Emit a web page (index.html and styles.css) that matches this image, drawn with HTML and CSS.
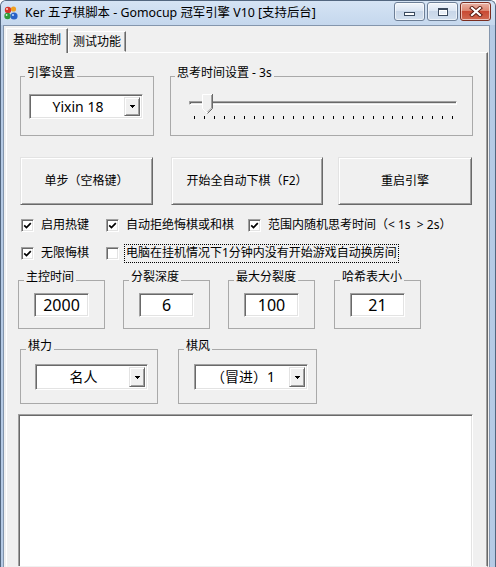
FILE: index.html
```html
<!DOCTYPE html>
<html lang="zh-CN">
<head>
<meta charset="utf-8">
<title>Ker 五子棋脚本</title>
<link rel="stylesheet" href="styles.css">
</head>
<body>
<div class="window">
  <div class="titlebar">
    <svg class="appicon" width="16" height="16" viewBox="0 0 16 16">
      <circle cx="5" cy="5" r="3.2" fill="#d8342a"/>
      <circle cx="10.5" cy="4" r="2.6" fill="#f0a020"/>
      <circle cx="4.5" cy="11" r="3.2" fill="#2f9a3a"/>
      <circle cx="11" cy="11" r="3.6" fill="#2a63c8"/>
      <circle cx="4" cy="4" r="1" fill="#ffd9c8"/>
      <circle cx="10" cy="10" r="1" fill="#cfe0ff"/>
      <circle cx="3.6" cy="10" r="0.9" fill="#d6f5d6"/>
    </svg>
    <span class="title">Ker 五子棋脚本 - Gomocup 冠军引擎 V10 [支持后台]</span>
    <div class="caption">
      <div class="cbtn">
        <span class="g-min"></span>
      </div>
      <div class="cbtn">
        <span class="g-max"></span>
      </div>
      <div class="cbtn close">
        <svg width="14" height="11" viewBox="0 0 14 11">
          <path d="M3 2 L11 9 M11 2 L3 9" stroke="#5b1a10" stroke-width="4" stroke-linecap="square"/>
          <path d="M3 2 L11 9 M11 2 L3 9" stroke="#ffffff" stroke-width="2.2" stroke-linecap="square"/>
        </svg>
      </div>
    </div>
  </div>

  <div class="client">
    <div class="tabs">
      <div class="tab active">基础控制</div>
      <div class="tab">测试功能</div>
    </div>

    <div class="panel">
      <div class="row row1">
        <fieldset class="group g-engine">
          <legend>引擎设置</legend>
          <div class="combo c-engine">
            <span class="combo-text">Yixin 18</span>
            <span class="drop"><svg width="5" height="3" viewBox="0 0 5 3" shape-rendering="crispEdges"><path d="M0 0h5v1h-1v1h-1v1h-1v-1h-1v-1h-1z" fill="#000"/></svg></span>
          </div>
        </fieldset>
        <fieldset class="group g-time">
          <legend>思考时间设置 - 3s</legend>
          <div class="slider">
            <div class="track"></div>
            <svg class="thumb" width="11" height="20" viewBox="0 0 11 20">
              <path d="M0.5 0.5 H10.5 V14.5 L5.5 19.5 L0.5 14.5 Z" fill="#f0f0f0"/>
              <path d="M0.5 14.5 V0.5 H10" stroke="#ffffff" fill="none"/>
              <path d="M10.5 0 V14.5 L5.5 19.5" stroke="#696969" fill="none"/>
              <path d="M9.5 1 V14 L5.5 18" stroke="#a0a0a0" fill="none"/>
              <path d="M0.5 14.5 L5 19" stroke="#ffffff" fill="none"/>
            </svg>
            <div class="ticks">
              <i></i><i></i><i></i><i></i><i></i><i></i><i></i><i></i><i></i>
              <i></i><i></i><i></i><i></i><i></i><i></i><i></i><i></i><i></i>
              <i></i><i></i><i></i><i></i><i></i><i></i><i></i><i></i><i></i>
            </div>
          </div>
        </fieldset>
      </div>

      <div class="row row2">
        <div class="btn b1">单步（空格键）</div>
        <div class="btn b2">开始全自动下棋（F2）</div>
        <div class="btn b3">重启引擎</div>
      </div>

      <div class="checks">
        <label class="chk"><span class="box"><svg width="9" height="9" viewBox="0 0 9 9"><path d="M1.2 4.3 L3.5 6.6 L7.8 2.2" stroke="#000" stroke-width="1.7" fill="none"/></svg></span><span>启用热键</span></label>
        <label class="chk"><span class="box"><svg width="9" height="9" viewBox="0 0 9 9"><path d="M1.2 4.3 L3.5 6.6 L7.8 2.2" stroke="#000" stroke-width="1.7" fill="none"/></svg></span><span>自动拒绝悔棋或和棋</span></label>
        <label class="chk"><span class="box"><svg width="9" height="9" viewBox="0 0 9 9"><path d="M1.2 4.3 L3.5 6.6 L7.8 2.2" stroke="#000" stroke-width="1.7" fill="none"/></svg></span><span>范围内随机思考时间（&lt; 1s &nbsp;&gt; 2s）</span></label>
        <label class="chk"><span class="box"><svg width="9" height="9" viewBox="0 0 9 9"><path d="M1.2 4.3 L3.5 6.6 L7.8 2.2" stroke="#000" stroke-width="1.7" fill="none"/></svg></span><span>无限悔棋</span></label>
        <label class="chk wide"><span class="box"></span><span class="focus">电脑在挂机情况下1分钟内没有开始游戏自动换房间</span></label>
      </div>

      <div class="row row4">
        <fieldset class="group g-small">
          <legend>主控时间</legend>
          <div class="edit">2000</div>
        </fieldset>
        <fieldset class="group g-small">
          <legend>分裂深度</legend>
          <div class="edit">6</div>
        </fieldset>
        <fieldset class="group g-small">
          <legend>最大分裂度</legend>
          <div class="edit">100</div>
        </fieldset>
        <fieldset class="group g-small">
          <legend>哈希表大小</legend>
          <div class="edit">21</div>
        </fieldset>
      </div>

      <div class="row row5">
        <fieldset class="group g-power">
          <legend>棋力</legend>
          <div class="combo c-power">
            <span class="combo-text">名人</span>
            <span class="drop"><svg width="5" height="3" viewBox="0 0 5 3" shape-rendering="crispEdges"><path d="M0 0h5v1h-1v1h-1v1h-1v-1h-1v-1h-1z" fill="#000"/></svg></span>
          </div>
        </fieldset>
        <fieldset class="group g-style">
          <legend>棋风</legend>
          <div class="combo c-style">
            <span class="combo-text">（冒进）1</span>
            <span class="drop"><svg width="5" height="3" viewBox="0 0 5 3" shape-rendering="crispEdges"><path d="M0 0h5v1h-1v1h-1v1h-1v-1h-1v-1h-1z" fill="#000"/></svg></span>
          </div>
        </fieldset>
      </div>

      <div class="log"></div>
    </div>
  </div>
</div>
</body>
</html>
```
FILE: styles.css
```css
* { box-sizing: border-box; }
html, body { margin: 0; padding: 0; }
body {
  width: 496px;
  height: 567px;
  overflow: hidden;
  font-family: "Noto Sans", "Noto Sans CJK SC", sans-serif;
  font-size: 12px;
  line-height: 14px;
  color: #000;
  background: #ffffff;
}

.window {
  width: 496px;
  height: 567px;
  display: flex;
  flex-direction: column;
  background: linear-gradient(90deg, #b4c9e4, #c5d7ee 6%, #c9daef 50%, #c5d7ee 94%, #b4c9e4);
  border: 1px solid #52667f;
  border-bottom: none;
  border-radius: 6px 6px 0 0;
  overflow: hidden;
}

/* title bar */
.titlebar {
  height: 24px;
  flex: none;
  display: flex;
  align-items: center;
  background: linear-gradient(#d5e3f4, #cbdcf0 60%, #c5d7ed);
}
.appicon { margin-left: 2px; flex: none; }
.title {
  margin-left: 6px;
  font-size: 12.4px;
  color: #000;
  white-space: nowrap;
  flex: 1;
}
.caption {
  display: flex;
  align-self: flex-start;
  margin-top: 1px;
  margin-right: 4px;
  gap: 2px;
}
.cbtn {
  width: 31px;
  height: 19px;
  border: 1px solid #6d7f97;
  border-radius: 3px;
  background: linear-gradient(#f1f5fb, #dce6f3 45%, #c8d6e8 50%, #d3e0ef);
  box-shadow: inset 0 0 0 1px rgba(255,255,255,0.6);
  display: flex;
  align-items: center;
  justify-content: center;
}
.cbtn.close {
  background: linear-gradient(#eab3a6, #dc8671 45%, #c94a33 50%, #d06a52);
  border-color: #7a2d20;
}
.g-min {
  width: 11px;
  height: 4px;
  margin-top: 5px;
  background: #fff;
  border: 1px solid #3b4a5e;
}
.g-max {
  width: 10px;
  height: 8px;
  border: 1px solid #3b4a5e;
  border-top-width: 2px;
  background: #e8eef6;
  box-shadow: inset 0 0 0 1px #fff;
}

/* client */
.client {
  flex: 1;
  margin: 0 5px 0 2px;
  background: #f0f0f0;
  border: 1px solid #8496ad;
  border-bottom: none;
  display: flex;
  flex-direction: column;
  overflow: hidden;
}
.tabs {
  height: 26px;
  flex: none;
  display: flex;
  align-items: flex-end;
  padding-left: 2px;
}
.tab {
  height: 21px;
  padding: 0 4px;
  line-height: 19px;
  border: 1px solid;
  border-color: #fff #696969 transparent #fff;
  box-shadow: inset -1px 0 #a0a0a0;
  background: #f0f0f0;
  white-space: nowrap;
}
.tab.active {
  height: 25px;
  padding: 0 6px;
  line-height: 22px;
  margin-bottom: -1px;
  border-bottom: none;
  z-index: 1;
}

.panel {
  flex: 1;
  margin: 0 1px 0 2px;
  border: 1px solid;
  border-color: #fff #696969 transparent #fff;
  box-shadow: inset -1px 0 #a0a0a0;
  padding-left: 11px;
  overflow: hidden;
}

.row { display: flex; align-items: flex-start; }

/* group boxes */
.group {
  margin: 0;
  padding: 0;
  min-width: 0;
  border: 1px solid #a9a9a9;
  box-sizing: border-box;
}
.group legend {
  margin-left: 5px;
  padding: 0 2px 6px;
  line-height: 14px;
  font-size: 12px;
}

.row1 { margin-top: 13px; }
.g-engine { width: 134px; height: 70px; margin-left: 2px; }
.g-engine legend { margin-left: 4px; }
.g-time { width: 303px; height: 70px; margin-left: 16px; }
.g-time legend { margin-left: 4px; }

/* combo box */
.combo {
  height: 25px;
  display: flex;
  border: 1px solid;
  border-color: #a0a0a0 #fff #fff #a0a0a0;
  box-shadow: inset 1px 1px #696969, inset -1px -1px #e3e3e3;
  background: #fff;
  padding: 2px;
}
.combo-text {
  flex: 1;
  text-align: center;
  font-size: 14px;
  line-height: 19px;
  white-space: nowrap;
}
.drop {
  width: 16px;
  flex: none;
  background: #f0f0f0;
  border: 1px solid;
  border-color: #e3e3e3 #696969 #696969 #e3e3e3;
  box-shadow: inset 1px 1px #fff, inset -1px -1px #a0a0a0;
  display: flex;
  align-items: center;
  justify-content: center;
}
.c-engine { width: 114px; margin: 8px 0 0 8px; }
.c-power { width: 113px; height: 26px; margin: 5px 0 0 14px; }
.c-style { width: 114px; height: 26px; margin: 5px 0 0 15px; }

/* slider */
.slider {
  position: relative;
  width: 268px;
  height: 27px;
  margin: 8px 0 0 18px;
  padding-top: 7px;
}
.track {
  height: 4px;
  border: 1px solid;
  border-color: #a0a0a0 #fff #fff #a0a0a0;
  box-shadow: inset 1px 1px #696969;
  background: #e3e3e3;
}
.thumb {
  position: absolute;
  left: 13px;
  top: 0;
}
.ticks {
  margin: 11px 0 0 5px;
  width: 259px;
  height: 3px;
  display: flex;
  justify-content: space-between;
}
.ticks i {
  display: block;
  width: 1px;
  height: 3px;
  background: #000;
}

/* buttons */
.row2 { margin-top: 21px; }
.btn {
  height: 48px;
  display: flex;
  align-items: center;
  justify-content: center;
  background: #f0f0f0;
  border: 1px solid;
  border-color: #e3e3e3 #696969 #696969 #e3e3e3;
  box-shadow: inset 1px 1px #fff, inset -1px -1px #a0a0a0;
  white-space: nowrap;
}
.b1 { width: 133px; margin-left: 2px; }
.b2 { width: 152px; margin-left: 18px; }
.b3 { width: 134px; margin-left: 15px; }

/* checkboxes */
.checks {
  margin: 11px 0 0 3px;
  display: grid;
  grid-template-columns: 85px 142px auto;
  grid-auto-rows: 18px;
  row-gap: 10px;
}
.chk {
  display: flex;
  align-items: center;
  gap: 7px;
  white-space: nowrap;
}
.chk.wide { grid-column: 2 / 4; gap: 5px; }
.box {
  width: 13px;
  height: 13px;
  flex: none;
  background: #fff;
  border: 1px solid;
  border-color: #a0a0a0 #fff #fff #a0a0a0;
  box-shadow: inset 1px 1px #696969, inset -1px -1px #e3e3e3;
  display: flex;
  align-items: center;
  justify-content: center;
}
.box svg { display: block; }
.focus {
  border: 1px dotted #000;
  padding: 1px 1px 2px;
}

/* small group boxes with edits */
.row4 { margin-top: 8px; }
.g-small { width: 87px; height: 59px; margin-left: 18px; }
.g-small:first-child { margin-left: 0; }
.g-small:last-child { margin-left: 19px; }
.edit {
  width: 55px;
  height: 24px;
  margin: 3px 0 0 15px;
  border: 1px solid;
  border-color: #a0a0a0 #fff #fff #a0a0a0;
  box-shadow: inset 1px 1px #696969, inset -1px -1px #e3e3e3;
  background: #fff;
  text-align: center;
  font-size: 16px;
  line-height: 22px;
}

/* 棋力 / 棋风 */
.row5 { margin-top: 10px; }
.g-power { width: 138px; height: 65px; margin-left: 2px; }
.g-style { width: 139px; height: 65px; margin-left: 20px; }

/* log box */
.log {
  width: 455px;
  height: 170px;
  margin-top: 10px;
  background: #fff;
  border: 1px solid;
  border-color: #a0a0a0 #fff #fff #a0a0a0;
  box-shadow: inset 1px 1px #696969, inset -1px -1px #e3e3e3;
}
```
